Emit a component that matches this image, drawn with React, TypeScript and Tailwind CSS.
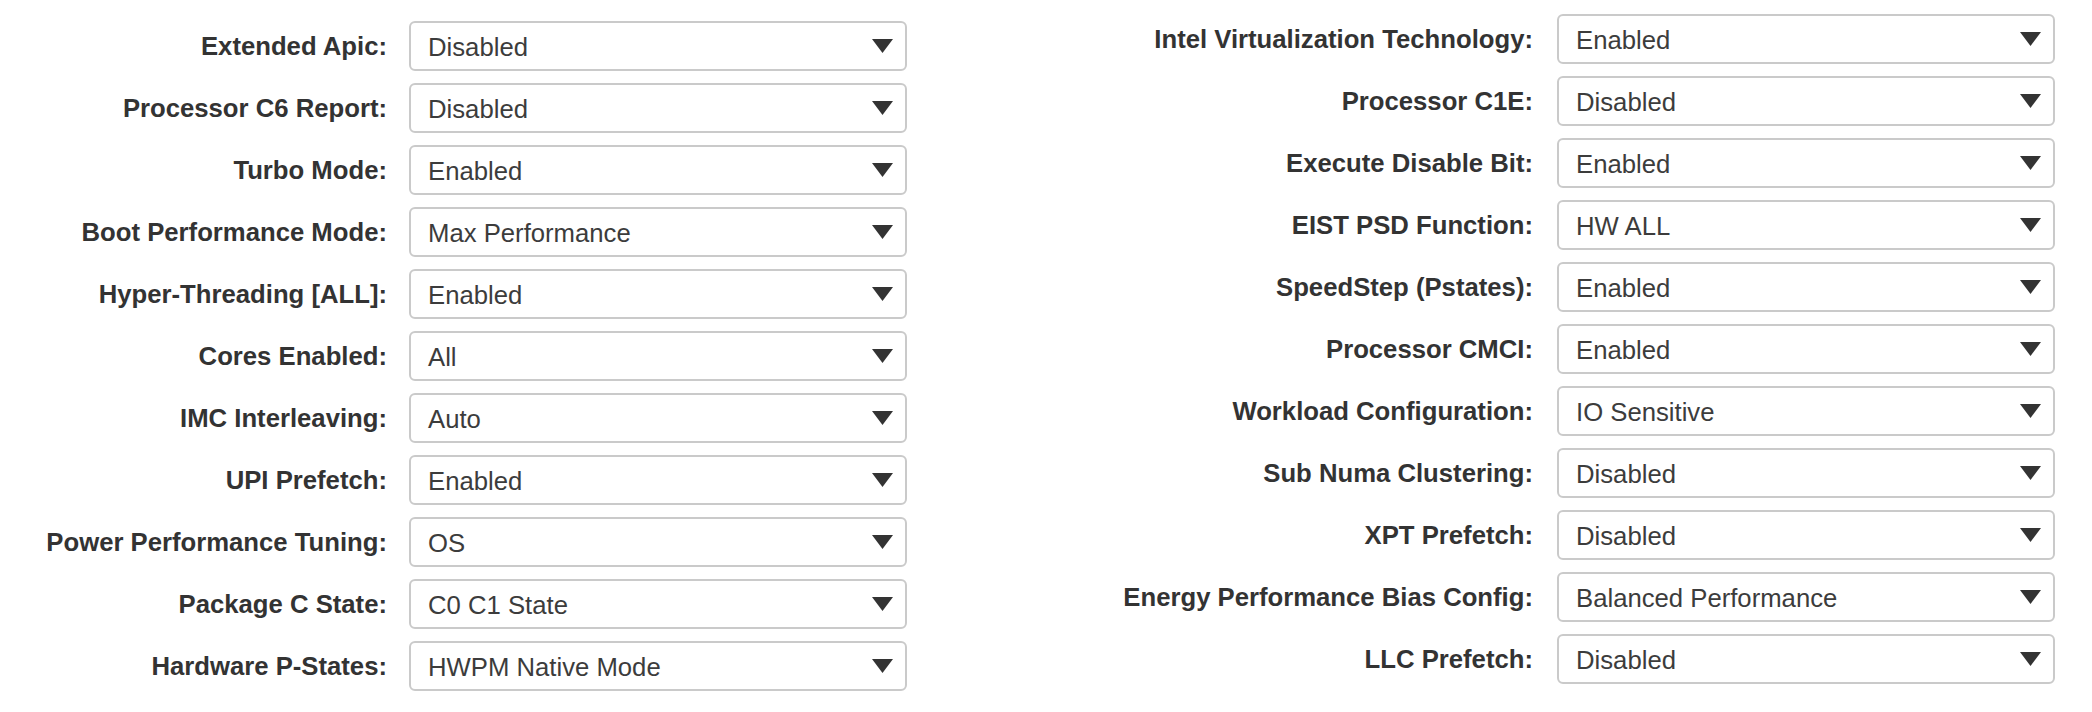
const LEFT: [string, string][] = [
  ["Extended Apic:", "Disabled"],
  ["Processor C6 Report:", "Disabled"],
  ["Turbo Mode:", "Enabled"],
  ["Boot Performance Mode:", "Max Performance"],
  ["Hyper-Threading [ALL]:", "Enabled"],
  ["Cores Enabled:", "All"],
  ["IMC Interleaving:", "Auto"],
  ["UPI Prefetch:", "Enabled"],
  ["Power Performance Tuning:", "OS"],
  ["Package C State:", "C0 C1 State"],
  ["Hardware P-States:", "HWPM Native Mode"],
]

const RIGHT: [string, string][] = [
  ["Intel Virtualization Technology:", "Enabled"],
  ["Processor C1E:", "Disabled"],
  ["Execute Disable Bit:", "Enabled"],
  ["EIST PSD Function:", "HW ALL"],
  ["SpeedStep (Pstates):", "Enabled"],
  ["Processor CMCI:", "Enabled"],
  ["Workload Configuration:", "IO Sensitive"],
  ["Sub Numa Clustering:", "Disabled"],
  ["XPT Prefetch:", "Disabled"],
  ["Energy Performance Bias Config:", "Balanced Performance"],
  ["LLC Prefetch:", "Disabled"],
]

function Caret() {
  return (
    <svg width="21" height="14" viewBox="0 0 21 14" className="shrink-0">
      <polygon points="0,0 21,0 10.5,14" fill="#333333" />
    </svg>
  )
}

function SelectBox({ value }: { value: string }) {
  return (
    <div className="flex items-center justify-between w-[498px] h-[50px] shrink-0 bg-white border-2 border-[#cacaca] rounded-[6px] pl-[17px] pr-[12px] text-[#3c3c3c]">
      <span className="font-normal pt-[4px]">{value}</span>
      <Caret />
    </div>
  )
}

function Field({ label, value, labelWidth, gap }: { label: string; value: string; labelWidth: string; gap: string }) {
  return (
    <div className="flex items-center">
      <label className={`${labelWidth} shrink-0 text-right font-bold text-[#333333] pt-[1px] whitespace-nowrap`}>{label}</label>
      <div className={gap}>
        <SelectBox value={value} />
      </div>
    </div>
  )
}

export default function App() {
  return (
    <div
      className="flex w-[2092px] h-[712px] bg-white text-[25.7px] leading-none"
      style={{ fontFamily: '"Liberation Sans", Arial, sans-serif' }}
    >
      <div className="flex flex-col gap-[12px] pt-[21px]">
        {LEFT.map(([l, v]) => (
          <Field key={l} label={l} value={v} labelWidth="w-[387px]" gap="ml-[22px]" />
        ))}
      </div>
      <div className="flex flex-col gap-[12px] pt-[14px]">
        {RIGHT.map(([l, v]) => (
          <Field key={l} label={l} value={v} labelWidth="w-[626px]" gap="ml-[24px]" />
        ))}
      </div>
    </div>
  )
}
